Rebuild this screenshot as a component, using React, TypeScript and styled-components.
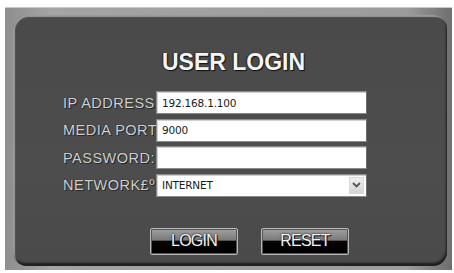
import React from "react";
import styled, { createGlobalStyle } from "styled-components";

const GlobalStyle = createGlobalStyle`
  html, body {
    margin: 0;
    padding: 0;
    background: #ffffff;
  }
  body {
    font-family: "Liberation Sans", Arial, sans-serif;
  }
`;

interface Field {
  label: string;
  value: string;
  select?: boolean;
}

const fields: Field[] = [
  { label: "IP ADDRESS", value: "192.168.1.100" },
  { label: "MEDIA PORT", value: "9000" },
  { label: "PASSWORD:", value: "" },
  { label: "NETWORK£º", value: "INTERNET", select: true }
];

const App: React.FC = () => {
  return (
    <>
      <GlobalStyle />
      <Page>
        <Frame>
          <Panel>
            <Title>USER LOGIN</Title>
            <Form>
              {fields.map((f) => (
                <React.Fragment key={f.label}>
                  <Label>{f.label}</Label>
                  <InputBox>
                    <InputText>{f.value}</InputText>
                    {f.select && (
                      <SelectArrow>
                        <svg width="9" height="6" viewBox="0 0 9 6">
                          <path
                            d="M1 1 L4.5 4.5 L8 1"
                            stroke="#555"
                            strokeWidth="1.8"
                            fill="none"
                          />
                        </svg>
                      </SelectArrow>
                    )}
                  </InputBox>
                </React.Fragment>
              ))}
            </Form>
            <Buttons>
              <Button>LOGIN</Button>
              <Button>RESET</Button>
            </Buttons>
          </Panel>
        </Frame>
      </Page>
    </>
  );
};

const Page = styled.div`
  width: 454px;
  height: 273px;
  padding: 7px 2px 3px 5px;
  box-sizing: border-box;
  display: flex;
`;

const Frame = styled.div`
  flex: 1;
  display: flex;
  padding: 7px 5px 4px 8px;
  background: linear-gradient(90deg, #8e8e8e 0%, #a4a4a4 10%, #9c9c9c 90%, #6e6e6e 100%);
  border-top: 1px solid #c8c8c8;
`;

const Panel = styled.div`
  flex: 1;
  border-radius: 14px;
  background: linear-gradient(180deg, #4a4a4a 0%, #4d4d4d 60%, #4a4a4a 100%);
  box-shadow: inset 2px 2px 1px rgba(220, 220, 220, 0.55),
    inset -1px -3px 2px rgba(20, 20, 20, 0.8);
  padding: 33px 0 0 50px;
  display: flex;
  flex-direction: column;
  align-items: flex-start;
`;

const Title = styled.h1`
  margin: 0 0 0 99px;
  font-family: "Liberation Sans", Arial, sans-serif;
  font-weight: bold;
  font-size: 23px;
  line-height: 28px;
  color: #f4f4f4;
  text-shadow: 1px 1px 1px #111, -1px 0 1px #222;
`;

const Form = styled.div`
  margin-top: 15px;
  display: grid;
  grid-template-columns: 93px 211px;
  grid-auto-rows: 23px;
  row-gap: 4.67px;
`;

const Label = styled.span`
  display: flex;
  align-items: center;
  font-family: "Liberation Sans", Arial, sans-serif;
  font-size: 14.5px;
  color: #d0d0d0;
  white-space: nowrap;
  overflow: hidden;
  letter-spacing: 0.5px;
  text-shadow: 0 0 1px #1a1a1a, 1px 1px 0 #2a2a2a;
`;

const InputBox = styled.div`
  display: flex;
  align-items: center;
  justify-content: space-between;
  background: #ffffff;
  border: 1px solid #8a8a8a;
  border-right-color: #6a6a6a;
  box-shadow: inset 1px 1px 0 #d0d0d0;
  padding: 0 2px 0 5px;
`;

const InputText = styled.span`
  font-family: "DejaVu Sans", Verdana, sans-serif;
  font-size: 10.5px;
  color: #1a1a1a;
  letter-spacing: -0.2px;
`;

const SelectArrow = styled.span`
  width: 15px;
  height: 17px;
  display: flex;
  align-items: center;
  justify-content: center;
  background: linear-gradient(180deg, #f0f0f0, #d4d4d4);
  border: 1px solid #d8d8d8;
  box-sizing: border-box;
`;

const Buttons = styled.div`
  margin: 31px 0 0 87px;
  display: flex;
  gap: 23px;
`;

const Button = styled.button`
  width: 88px;
  height: 27px;
  padding: 0;
  border: 1px solid #b8b8b8;
  border-radius: 2px;
  background: linear-gradient(
    180deg,
    #a0a0a0 0%,
    #7a7a7a 45%,
    #050505 48%,
    #000000 100%
  );
  box-shadow: inset 0 0 0 1px #555;
  font-family: "Liberation Sans", Arial, sans-serif;
  font-size: 16px;
  letter-spacing: -0.8px;
  color: #f2f2f2;
  text-shadow: 0 0 2px #000, 1px 1px 0 #111;
  cursor: pointer;
`;

export default App;
